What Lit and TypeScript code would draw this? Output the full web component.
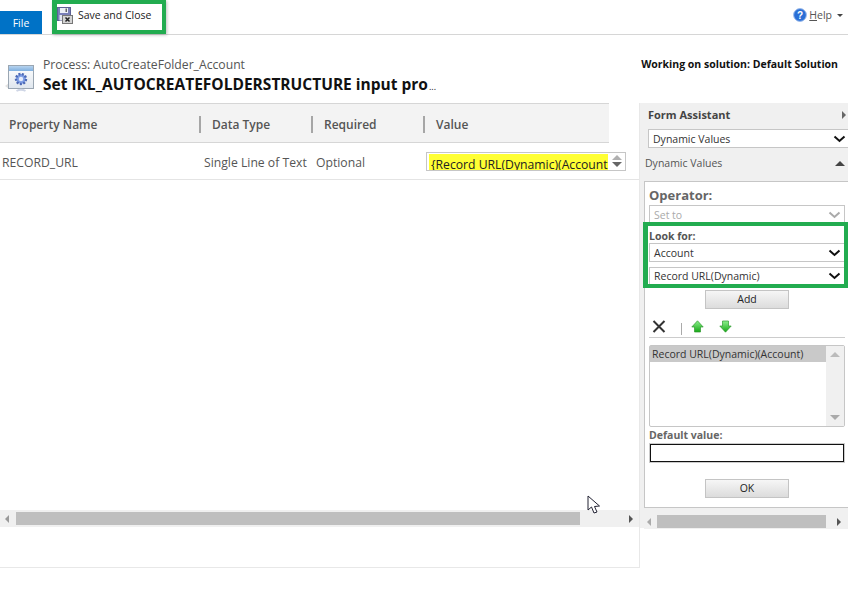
import { LitElement, html, css, svg } from "lit";
import { customElement } from "lit/decorators.js";

const chevron = (color = "#111") => svg`<svg width="13" height="8" viewBox="0 0 13 8"><path d="M1.5 1.5 L6.5 6 L11.5 1.5" fill="none" stroke=${color} stroke-width="2"/></svg>`;

const saveIcon = svg`<svg width="16" height="18" viewBox="0 0 16 18" style="display:block">
  <rect x="0.5" y="1.5" width="13" height="13" fill="#7a7fb8" stroke="#5c6094"/>
  <rect x="3" y="2" width="8" height="5" fill="#eef0f8"/>
  <rect x="8.5" y="2.5" width="1.5" height="3.5" fill="#666"/>
  <rect x="2.5" y="9" width="9" height="5.5" fill="#e4e6f0"/>
  <rect x="5.5" y="9.5" width="10" height="8" fill="#d4d4d4" stroke="#777"/>
  <path d="M8.5 11.5 L12.5 15.5 M12.5 11.5 L8.5 15.5" stroke="#222" stroke-width="1.5"/>
</svg>`;

const processIcon = svg`<svg width="30" height="30" viewBox="0 0 30 30" style="display:block">
  <defs>
    <linearGradient id="bar" x1="0" y1="0" x2="0" y2="1"><stop offset="0" stop-color="#b7d3ee"/><stop offset="1" stop-color="#7fb0e0"/></linearGradient>
    <linearGradient id="body" x1="0" y1="0" x2="0" y2="1"><stop offset="0" stop-color="#fff"/><stop offset="1" stop-color="#dfe6ee"/></linearGradient>
  </defs>
  <path d="M0 21 L4 18 V24 Z" fill="#e2e2e2"/>
  <rect x="3.5" y="0.5" width="25" height="23" fill="url(#body)" stroke="#9aa6b2"/>
  <rect x="4" y="1" width="24" height="5" fill="url(#bar)"/>
  <circle cx="16" cy="14" r="5" fill="#7f9fe6" stroke="#4c69b5" stroke-width="2.4" stroke-dasharray="2 1.4"/>
  <circle cx="16" cy="14" r="2.2" fill="#e6ecfa"/>
  <path d="M11.5 26 Q16 23.5 20.5 26" fill="none" stroke="#cfd6e6" stroke-width="2"/>
</svg>`;

const helpIcon = svg`<svg width="14" height="14" viewBox="0 0 14 14" style="display:block">
  <circle cx="7" cy="7" r="6.4" fill="#2a6fd6" stroke="#9dbcec"/>
  <text x="7" y="10.6" text-anchor="middle" font-family="Liberation Sans" font-weight="700" font-size="10" fill="#fff">?</text>
</svg>`;

const green = svg`<defs><linearGradient id="gr" x1="0" y1="0" x2="0" y2="1"><stop offset="0" stop-color="#8cf08c"/><stop offset="1" stop-color="#16a816"/></linearGradient></defs>`;
const arrowUp = svg`<svg width="13" height="13" viewBox="0 0 13 13" style="display:block">${green}<path d="M6.5 0.8 L12.2 7 H9.5 V12 H3.5 V7 H0.8 Z" fill="url(#gr)" stroke="#2f9a2f" stroke-width="0.7"/></svg>`;
const arrowDown = svg`<svg width="13" height="13" viewBox="0 0 13 13" style="display:block"><path d="M3.5 1 H9.5 V6 H12.2 L6.5 12.2 L0.8 6 H3.5 Z" fill="url(#gr)" stroke="#2f9a2f" stroke-width="0.7"/></svg>`;
const crossIcon = svg`<svg width="14" height="13" viewBox="0 0 14 13" style="display:block"><path d="M1.5 1 L12.5 12 M12.5 1 L1.5 12" stroke="#333" stroke-width="2"/></svg>`;
const cursor = svg`<svg width="14" height="20" viewBox="0 0 14 20" style="display:block"><path d="M1 1 V15 L4.5 12 L7 18 L10 17 L7.5 11.5 L12.5 11 Z" fill="#fff" stroke="#223" stroke-width="1"/></svg>`;

@customElement("app-root")
export class AppRoot extends LitElement {
  static styles = css`
    :host {
      display: block;
      width: 848px;
      height: 596px;
      position: relative;
      overflow: hidden;
      background: #fff;
      font-family: "Open Sans", "Liberation Sans", sans-serif;
      font-size: 12px;
      color: #444;
    }
    .ribbon {
      height: 34px;
      border-bottom: 1px solid #d6d6d6;
      display: flex;
      align-items: flex-start;
    }
    .file {
      width: 42px;
      height: 22px;
      padding-top: 1px;
      margin-top: 11px;
      background: #0072c6;
      color: #fff;
      font-size: 10.5px;
      display: flex;
      align-items: center;
      justify-content: center;
    }
    .save {
      display: flex;
      gap: 5px;
      margin: 6px 0 0 15px;
      color: #222;
      font-size: 10.5px;
      line-height: 18px;
    }
    .help {
      margin: 8px 5px 0 auto;
      display: flex;
      align-items: center;
      gap: 2px;
      font-size: 10.5px;
      color: #555;
    }
    .help u { text-underline-offset: 1px; }
    .caret {
      width: 0;
      height: 0;
      margin-left: 3px;
      border: 3px solid transparent;
      border-top: 3px solid #444;
      border-bottom: 0;
    }
    .head {
      height: 68px;
      display: flex;
      box-sizing: border-box;
      padding: 22px 10px 0 5px;
    }
    .head-icon { margin-top: 8px; margin-right: 8px; width: 30px; }
    .proc { font-size: 12.2px; line-height: 16px; color: #555; }
    .title {
      margin-top: 1px;
      font-size: 15.5px;
      line-height: 20px;
      font-weight: 700;
      color: #111;
      white-space: nowrap;
    }
    .title small { font-size: 9px; font-weight: 400; margin-left: 1px; }
    .solution {
      margin: -1px 0 0 auto;
      font-size: 10.5px;
      font-weight: 700;
      color: #111;
      line-height: 16px;
    }
    .main { display: flex; height: 464px; }
    .left {
      width: 640px;
      box-sizing: border-box;
      height: 465px;
      border-right: 1px solid #e8e8e8;
      border-bottom: 1px solid #e8e8e8;
      display: flex;
      flex-direction: column;
    }
    .grid-head, .grid-row {
      display: grid;
      align-items: center;
    }
    .grid-head {
      grid-template-columns: 199px 112px 112px 186px;
      width: 609px;
      height: 36px;
      padding-top: 2px;
      background: #f3f3f3;
      border-top: 1px solid #d6d6d6;
      font-weight: 600;
      font-size: 12px;
      color: #555;
      box-shadow: 0 1px 0 #d6d6d6;
    }
    .grid-head > div {
      box-sizing: border-box;
      height: 17px;
      line-height: 17px;
      padding-left: 11px;
      border-left: 2px solid #a6a6a6;
    }
    .grid-head > div:first-child { border-left: 0; padding-left: 9px; }
    .rowline {
      height: 36px;
      margin-top: 1px;
      border-bottom: 1px solid #e4e4e4;
    }
    .grid-row {
      grid-template-columns: 204px 112px 110px 200px;
      width: 630px;
      height: 36px;
      font-size: 12.2px;
      color: #555;
    }
    .cell { padding-top: 2px; }
    .cell.first { padding-left: 2px; }
    .valuebox {
      width: 200px;
      height: 19px;
      box-sizing: border-box;
      border: 1px solid #c6c6c6;
      padding: 1px 0 0 2px;
      display: flex;
      overflow: hidden;
    }
    .valuetext {
      width: 179px;
      height: 16px;
      background: #ffff33;
      color: #222;
      padding-left: 2px;
      box-sizing: border-box;
      overflow: hidden;
      white-space: nowrap;
      font-size: 12.2px;
      line-height: 21px;
    }
    .spin {
      flex: 1;
      display: flex;
      flex-direction: column;
      align-items: center;
      justify-content: center;
      gap: 2px;
      margin-top: -1px;
    }
    .up, .down {
      width: 0;
      height: 0;
      border-left: 5px solid transparent;
      border-right: 5px solid transparent;
    }
    .up { border-bottom: 5px solid #b0b0b0; }
    .down { border-top: 5px solid #666; }
    .grow { flex: 1; }
    .hscroll {
      height: 17px;
      background: #f0f0f0;
      display: flex;
      align-items: center;
    }
    .thumb { height: 13px; background: #bfbfbf; }
    .tl, .tr {
      width: 0;
      height: 0;
      border-top: 4px solid transparent;
      border-bottom: 4px solid transparent;
    }
    .tl { border-right: 4px solid #999; }
    .tr { border-left: 4px solid #555; }
    .left .hscroll { margin-bottom: 40px; }
    .left .tl { margin: 0 5px; }
    .left .thumb { width: 564px; margin-left: 2px; }
    .left .tr { margin-left: 49px; }
    .right {
      width: 208px;
      background: #f0f0f0;
      height: 425px;
      box-sizing: border-box;
    }
    .fa-title {
      font-size: 11px;
      font-weight: 700;
      color: #444;
      padding: 4px 0 0 8px;
      height: 26px;
      box-sizing: border-box;
      line-height: 16px;
      display: flex;
      justify-content: space-between;
    }
    .fa-title .more {
      margin: 4px 2px 0 0;
      width: 0;
      height: 0;
      border-top: 4px solid transparent;
      border-bottom: 4px solid transparent;
      border-left: 4px solid #666;
    }
    .select {
      box-sizing: border-box;
      background: #fff;
      border: 1px solid #c6c6c6;
      display: flex;
      align-items: center;
      justify-content: space-between;
      padding: 0 3px 0 4px;
      font-size: 10.5px;
      color: #333;
      height: 19px;
    }
    .select.top { margin-left: 8px; border-right: 0; padding-right: 2px; }
    .dv {
      display: flex;
      justify-content: space-between;
      align-items: center;
      height: 33px;
      box-sizing: border-box;
      padding: 0 3px 3px 5px;
      font-size: 10.5px;
      color: #555;
    }
    .dv i {
      width: 0;
      height: 0;
      border-left: 5px solid transparent;
      border-right: 5px solid transparent;
      border-bottom: 5px solid #444;
    }
    .box {
      margin-left: 4px;
      height: 327px;
      box-sizing: border-box;
      background: #fff;
      border: 1px solid #c6c6c6;
      border-right: 0;
      padding: 0 3px 0 4px;
    }
    .op {
      font-size: 13px;
      font-weight: 700;
      color: #666;
      line-height: 18px;
      margin-top: 4px;
    }
    .select.disabled { color: #aaa; height: 18px; margin-top: 1px; padding-top: 1px; }
    .lf {
      font-size: 10.5px;
      font-weight: 700;
      color: #555;
      line-height: 14px;
      margin-top: 6px;
    }
    .select.rec { height: 18px; margin-top: 5px; }
    .btn {
      display: block;
      width: 84px;
      height: 19px;
      box-sizing: border-box;
      margin: 0 auto;
      text-align: center;
      border: 1px solid #c4c4c4;
      background: linear-gradient(#f6f6f6, #dcdcdc);
      font-size: 10.5px;
      line-height: 17px;
      color: #222;
    }
    .btn.add { margin-top: 5px; }
    .tools {
      display: flex;
      align-items: center;
      height: 29px;
      padding: 7px 0 0 3px;
      box-sizing: border-box;
      border-bottom: 1px solid #ccc;
    }
    .tools .sep { width: 1px; height: 12px; background: #aaa; margin: 4px 9px 0 15px; }
    .tools .dn { margin-left: 15px; }
    .list {
      margin-top: 7px;
      height: 82px;
      box-sizing: border-box;
      border: 1px solid #c6c6c6;
      border-radius: 2px;
      display: flex;
    }
    .items { flex: 1; }
    .sel {
      height: 16px;
      background: #c9c9c9;
      padding-left: 2px;
      font-size: 10.5px;
      line-height: 16px;
      color: #333;
    }
    .vs {
      width: 18px;
      background: #f0f0f0;
      display: flex;
      flex-direction: column;
      justify-content: space-between;
      align-items: center;
      padding: 6px 0;
      box-sizing: border-box;
    }
    .vs .up { border-bottom-color: #bbb; }
    .vs .down { border-top-color: #aaa; }
    .dflt {
      font-size: 10.5px;
      font-weight: 700;
      color: #666;
      line-height: 14px;
      margin-top: 1px;
    }
    .input {
      height: 18px;
      box-sizing: border-box;
      border: 1px solid #111;
      outline: 1px solid #ccc;
      margin: 2px 1px 0 1px;
    }
    .btn.ok { margin-top: 17px; }
    .right .hscroll { margin: 6px 0 0 4px; height: 15px; }
    .right .tl { margin: 0 6px 0 3px; border-right-color: #aaa; }
    .right .thumb { width: 169px; }
    .right .tr { margin-left: 11px; }
    .mark {
      position: absolute;
      box-sizing: border-box;
      border: 4px solid #22ac50;
      pointer-events: none;
    }
    .mark.m1 { left: 52px; top: 0; width: 114px; height: 34px; border-left-width: 5px; box-shadow: 1px 1px 3px rgba(0,0,0,0.25); }
    .mark.m2 { left: 643px; top: 222px; width: 205px; height: 66px; border-left-width: 5px; }
    .cursor { position: absolute; left: 587px; top: 495px; }
  `;

  render() {
    return html`
      <div class="ribbon">
        <div class="file">File</div>
        <div class="save">${saveIcon}<span>Save and Close</span></div>
        <div class="help">${helpIcon}<span><u>H</u>elp</span><span class="caret"></span></div>
      </div>
      <div class="head">
        <div class="head-icon">${processIcon}</div>
        <div>
          <div class="proc">Process: AutoCreateFolder_Account</div>
          <div class="title">Set IKL_AUTOCREATEFOLDERSTRUCTURE input pro<small>...</small></div>
        </div>
        <div class="solution">Working on solution: Default Solution</div>
      </div>
      <div class="main">
        <div class="left">
          <div class="grid-head">
            <div>Property Name</div>
            <div>Data Type</div>
            <div>Required</div>
            <div>Value</div>
          </div>
          <div class="rowline">
            <div class="grid-row">
              <div class="cell first">RECORD_URL</div>
              <div class="cell">Single Line of Text</div>
              <div class="cell">Optional</div>
              <div class="valuebox">
                <div class="valuetext">{Record URL(Dynamic)(Account)}</div>
                <div class="spin"><span class="up"></span><span class="down"></span></div>
              </div>
            </div>
          </div>
          <div class="grow"></div>
          <div class="hscroll">
            <span class="tl"></span>
            <span class="thumb"></span>
            <span class="tr"></span>
          </div>
        </div>
        <div class="right">
          <div class="fa-title">Form Assistant<span class="more"></span></div>
          <div class="select top">Dynamic Values ${chevron()}</div>
          <div class="dv">Dynamic Values<i></i></div>
          <div class="box">
            <div class="op">Operator:</div>
            <div class="select disabled">Set to ${chevron("#aaa")}</div>
            <div class="lf">Look for:</div>
            <div class="select acc">Account ${chevron()}</div>
            <div class="select rec">Record URL(Dynamic) ${chevron()}</div>
            <div class="btn add">Add</div>
            <div class="tools">
              ${crossIcon}<span class="sep"></span>${arrowUp}<span class="dn">${arrowDown}</span>
            </div>
            <div class="list">
              <div class="items"><div class="sel">Record URL(Dynamic)(Account)</div></div>
              <div class="vs"><span class="up"></span><span class="down"></span></div>
            </div>
            <div class="dflt">Default value:</div>
            <div class="input"></div>
            <div class="btn ok">OK</div>
          </div>
          <div class="hscroll">
            <span class="tl"></span>
            <span class="thumb"></span>
            <span class="tr"></span>
          </div>
        </div>
      </div>
      <div class="mark m1"></div>
      <div class="mark m2"></div>
      <div class="cursor">${cursor}</div>
    `;
  }
}
